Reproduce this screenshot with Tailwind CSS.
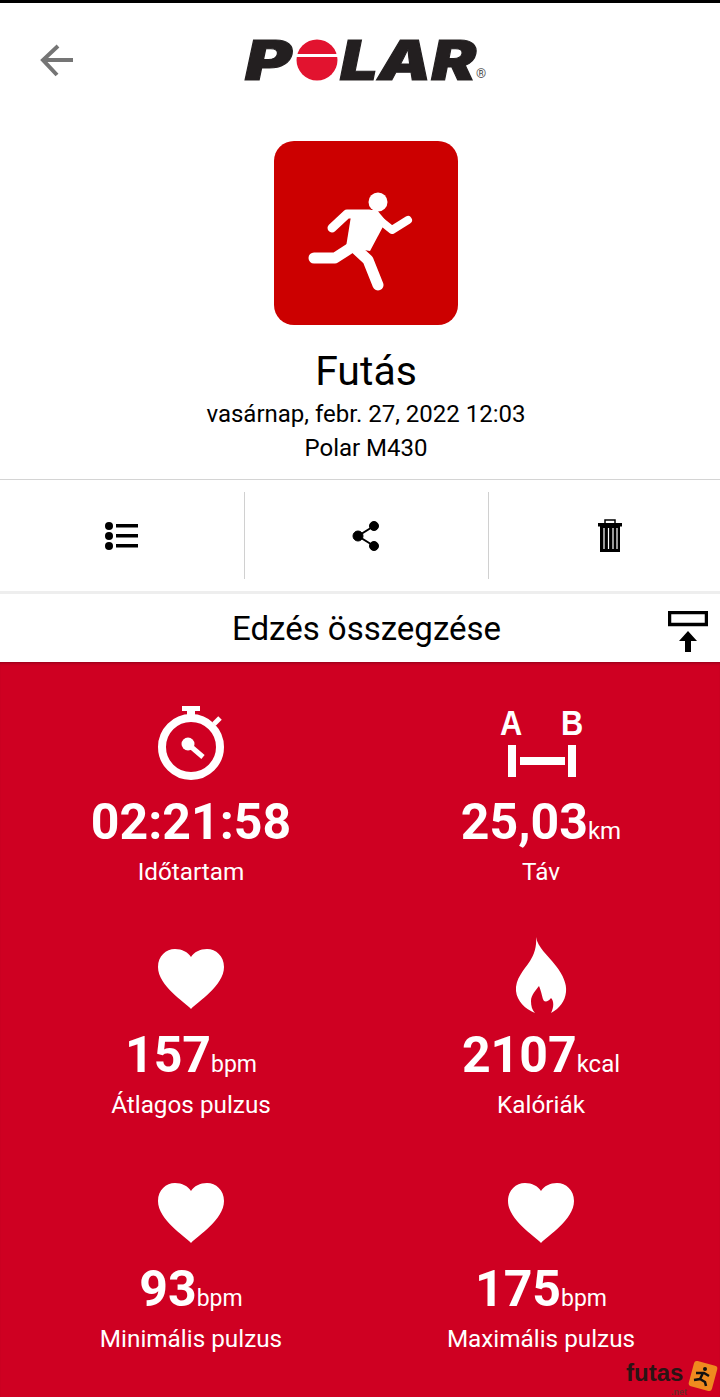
<!DOCTYPE html>
<html lang="hu">
  <head>
    <meta charset="UTF-8" />
    <title>Polar Flow - Futás</title>
    <meta name="viewport" content="width=device-width, initial-scale=1.0" />
    <script src="https://cdn.jsdelivr.net/npm/@tailwindcss/browser@4"></script>
  </head>
  <body class="bg-white text-black font-['Roboto',sans-serif]">
    <div class="relative w-[720px] h-[1400px] overflow-hidden flex flex-col">
      <div class="h-[3px] bg-black"></div>

      <!-- header -->
      <header class="relative h-[117px]">
        <svg class="absolute left-[38px] top-[40px]" width="38" height="36" viewBox="0 0 38 36" fill="none" stroke="#757575" stroke-width="4">
          <path d="M35 17H6M20 3 5 17l14 15" />
        </svg>
        <span class="absolute left-[245px] top-[27px] text-[55px] leading-[60px] font-black italic text-[#231f20] font-['Inter',sans-serif] scale-x-[1.29] origin-left [-webkit-text-stroke:1px_#231f20]">P</span>
        <svg class="absolute left-[296px] top-[36px]" width="42" height="42" viewBox="0 0 42 42">
          <circle cx="21" cy="21" r="20.5" fill="#e2132f" />
          <rect x="0" y="15" width="42" height="3" fill="#fff" />
        </svg>
        <span class="absolute left-[340px] top-[27px] text-[55px] leading-[60px] font-black italic text-[#231f20] font-['Inter',sans-serif] scale-x-[1.22] origin-left [-webkit-text-stroke:1px_#231f20]">LAR</span>
        <span class="absolute left-[476px] top-[64px] text-[13px] leading-[14px] text-[#555]">®</span>
      </header>

      <!-- activity -->
      <section class="flex flex-col items-center h-[360px] pt-[21px] border-b border-[#d4d4d4]">
        <div class="ml-[12px] w-[184px] h-[184px] rounded-[20px] bg-[#cc0000] flex items-center justify-center">
          <svg width="184" height="184" viewBox="0 0 184 184" fill="none" stroke="#fff" stroke-linecap="round" stroke-linejoin="round">
            <circle cx="104" cy="61" r="9.5" fill="#fff" stroke="none" />
            <path d="M58 87 73 73h22" stroke-width="9" />
            <path d="M103 77 118 89 134 79" stroke-width="8" />
            <path d="M78 69h25l9 11-16 30-24-4z" fill="#fff" stroke="none" />
            <path d="M78 106 61 117H40" stroke-width="11" />
            <path d="M80 106 94 119 104 144" stroke-width="11" />
          </svg>
        </div>
        <h1 class="mt-[21px] text-[41px] leading-[50px] font-normal ml-[12px]">Futás</h1>
        <p class="mt-[1px] text-[24px] leading-[34px] ml-[12px]">vasárnap, febr. 27, 2022 12:03</p>
        <p class="text-[24px] leading-[34px] ml-[12px]">Polar M430</p>
      </section>

      <!-- actions -->
      <div class="h-[111px] grid grid-cols-[245px_244px_231px] items-center shrink-0">
        <div class="h-[87px] border-r border-[#d0d0d0] flex items-center justify-center">
          <svg width="36" height="30" viewBox="0 0 36 30" fill="#000">
            <circle cx="5" cy="5" r="4" /><circle cx="5" cy="15" r="4" /><circle cx="5" cy="25" r="4" />
            <rect x="12" y="3" width="22" height="3.5" /><rect x="12" y="13" width="22" height="3.5" /><rect x="12" y="23" width="22" height="3.5" />
          </svg>
        </div>
        <div class="h-[87px] border-r border-[#d0d0d0] flex items-center justify-center">
          <svg width="32" height="32" viewBox="0 0 32 32" fill="#000" stroke="#000">
            <circle cx="23" cy="6" r="4.5" /><circle cx="7" cy="16" r="5" /><circle cx="23" cy="26" r="4.5" />
            <path d="M23 6 7 16l16 10" fill="none" stroke-width="2" />
          </svg>
        </div>
        <div class="flex items-center justify-center pl-[10px]">
          <svg width="26" height="34" viewBox="0 0 26 34">
            <rect x="8" y="1" width="10" height="4" fill="none" stroke="#000" stroke-width="1.5" />
            <rect x="1" y="4" width="24" height="3.5" fill="#000" />
            <path d="M3 7h20v26H3z" fill="#000" />
            <path d="M7 9v21M11.5 9v21M16 9v21M20 9v21" stroke="#fff" stroke-width="1.2" />
          </svg>
        </div>
      </div>
      <div class="h-[3px] bg-[#eeeeee]"></div>

      <!-- summary title -->
      <div class="relative h-[68px] flex items-center justify-center shrink-0 pt-[2px]">
        <h2 class="ml-[13px] text-[33px] leading-[40px] font-normal">Edzés összegzése</h2>
        <svg class="absolute left-[668px] top-[17px]" width="40" height="42" viewBox="0 0 40 42" fill="#000">
          <rect x="1.5" y="1.5" width="37" height="12" fill="none" stroke="#000" stroke-width="3.5" />
          <path d="M20 20 29 30h-6v11h-6V30h-6z" />
        </svg>
      </div>

      <!-- stats -->
      <main class="h-[735px] bg-[#cf0022] text-white pl-[16px] pr-[4px] grid grid-cols-2 grid-rows-[234px_234px_267px] shadow-[inset_0_3px_3px_-2px_rgba(80,0,20,0.5)]">
        <div class="flex flex-col items-center pt-[41px]">
          <svg width="70" height="78" viewBox="0 0 70 78" fill="none" stroke="#fff">
            <path d="M26 3h18v5h-5v7h-8V8h-5z" fill="#fff" stroke="none" />
            <circle cx="35" cy="44" r="29" stroke-width="8" />
            <path d="M58 21l6-6" stroke-width="5" />
            <circle cx="32" cy="41" r="6.5" fill="#fff" stroke="none" />
            <path d="M33 42 47 54" stroke-width="5" />
          </svg>
          <p class="mt-[6px] text-[50px] leading-[70px] font-bold">02:21:58</p>
          <p class="text-[24.3px] leading-[30px]">Időtartam</p>
        </div>
        <div class="flex flex-col items-center pt-[41px]">
          <div class="relative w-[84px] h-[78px]">
            <span class="absolute left-[1px] top-[1px] text-[35px] leading-[38px] font-bold font-['Liberation_Sans',sans-serif] scale-x-[0.88] origin-left">A</span>
            <span class="absolute left-[62px] top-[1px] text-[35px] leading-[38px] font-bold font-['Liberation_Sans',sans-serif] scale-x-[0.88] origin-left">B</span>
            <div class="absolute left-[9px] top-[42px] w-[8px] h-[32px] bg-white"></div>
            <div class="absolute left-[21px] top-[54px] w-[45px] h-[8px] bg-white"></div>
            <div class="absolute left-[69px] top-[42px] w-[8px] h-[32px] bg-white"></div>
          </div>
          <p class="mt-[6px] text-[50px] leading-[70px] font-bold">25,03<span class="text-[24px] leading-none font-normal">km</span></p>
          <p class="text-[24.3px] leading-[30px]">Táv</p>
        </div>

        <div class="flex flex-col items-center pt-[52px]">
          <svg width="68" height="62" viewBox="0 0 68 62">
            <path d="M34 61C28 54 1 38 1 19 1 8 9 1 18 1 25 1 31 4 34 9 37 4 43 1 50 1 59 1 67 8 67 19 67 38 40 54 34 61z" fill="#fff" />
          </svg>
          <p class="mt-[10px] text-[50px] leading-[70px] font-bold">157<span class="text-[23px] leading-none font-normal">bpm</span></p>
          <p class="text-[24.3px] leading-[30px]">Átlagos pulzus</p>
        </div>
        <div class="flex flex-col items-center pt-[41px]">
          <svg width="52" height="76" viewBox="0 0 52 76">
            <path d="M21 0c2 11 11 17 20 29 7 9 11 18 10 26-1 9-6 16-15 21 3-6 3-12 0-15-2 3-5 4-7 3-2-3-2-8-5-15-3 4-8 9-8 15 0 5 1 9 4 12C10 72 2 64 1 54 0 42 9 33 15 24 19 18 22 9 21 0z" fill="#fff" />
          </svg>
          <p class="mt-[7px] text-[50px] leading-[70px] font-bold">2107<span class="text-[24px] leading-none font-normal">kcal</span></p>
          <p class="text-[24.3px] leading-[30px]">Kalóriák</p>
        </div>

        <div class="flex flex-col items-center pt-[52px]">
          <svg width="68" height="62" viewBox="0 0 68 62">
            <path d="M34 61C28 54 1 38 1 19 1 8 9 1 18 1 25 1 31 4 34 9 37 4 43 1 50 1 59 1 67 8 67 19 67 38 40 54 34 61z" fill="#fff" />
          </svg>
          <p class="mt-[10px] text-[50px] leading-[70px] font-bold">93<span class="text-[23px] leading-none font-normal">bpm</span></p>
          <p class="text-[24.3px] leading-[30px]">Minimális pulzus</p>
        </div>
        <div class="flex flex-col items-center pt-[52px]">
          <svg width="68" height="62" viewBox="0 0 68 62">
            <path d="M34 61C28 54 1 38 1 19 1 8 9 1 18 1 25 1 31 4 34 9 37 4 43 1 50 1 59 1 67 8 67 19 67 38 40 54 34 61z" fill="#fff" />
          </svg>
          <p class="mt-[10px] text-[50px] leading-[70px] font-bold">175<span class="text-[23px] leading-none font-normal">bpm</span></p>
          <p class="text-[24.3px] leading-[30px]">Maximális pulzus</p>
        </div>
      </main>

      <!-- watermark -->
      <div class="absolute left-[626px] top-[1360px] w-[94px] h-[37px]">
        <span class="absolute left-0 top-[1px] text-[24px] leading-[23px] font-bold text-[#2a1414] font-['Liberation_Sans',sans-serif]">futas</span>
        <span class="absolute left-[45px] top-[27px] text-[9px] leading-[10px] font-bold text-[#6a2a2a] font-['Liberation_Sans',sans-serif]">.net</span>
        <div class="absolute left-[65px] top-[3px] w-[24px] h-[26px] rotate-[15deg] rounded-[3px] bg-[#ef8a1f]"></div>
        <svg class="absolute left-[64px] top-[3px]" width="26" height="26" viewBox="0 0 26 26" fill="none" stroke="#111" stroke-width="2.5">
          <circle cx="15" cy="6" r="2" fill="#111" stroke="none" />
          <path d="M6 10h8l5 3M13 10l-3 6-6 1M10 16l5 3 1 4" />
        </svg>
      </div>
    </div>
  </body>
</html>
